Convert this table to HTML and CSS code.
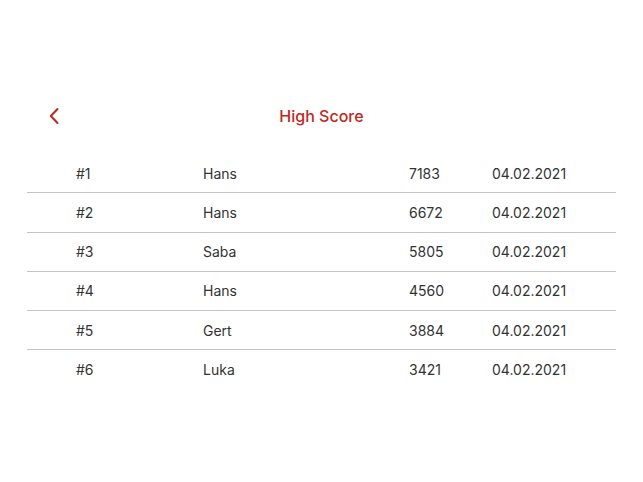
FILE: index.html
```html
<!DOCTYPE html>
<html lang="de">
<head>
<meta charset="utf-8">
<title>High Score</title>
<link rel="stylesheet" href="styles.css">
</head>
<body>
<div class="page">
  <header class="nav">
    <button class="back" aria-label="Zurück">
      <svg width="12" height="18" viewBox="0 0 12 18"><path d="M9.5 2 L2.8 9 L9.5 16" fill="none" stroke="#c0281e" stroke-width="2" stroke-linecap="round" stroke-linejoin="round"/></svg>
    </button>
    <h1 class="title">High Score</h1>
    <span></span>
  </header>
  <div class="table">
    <div class="row"><span>#1</span><span>Hans</span><span>7183</span><span>04.02.2021</span></div>
    <div class="row"><span>#2</span><span>Hans</span><span>6672</span><span>04.02.2021</span></div>
    <div class="row"><span>#3</span><span>Saba</span><span>5805</span><span>04.02.2021</span></div>
    <div class="row"><span>#4</span><span>Hans</span><span>4560</span><span>04.02.2021</span></div>
    <div class="row"><span>#5</span><span>Gert</span><span>3884</span><span>04.02.2021</span></div>
    <div class="row"><span>#6</span><span>Luka</span><span>3421</span><span>04.02.2021</span></div>
  </div>
</div>
</body>
</html>
```

FILE: styles.css
```css
html, body {
  margin: 0;
  background: #ffffff;
}
body {
  font-family: Inter, "Noto Sans", "Liberation Sans", sans-serif;
  color: #333333;
}
.page {
  padding: 96px 27px 0;
}
.nav {
  display: grid;
  grid-template-columns: 1fr auto 1fr;
  align-items: center;
  height: 40px;
}
.back {
  justify-self: start;
  margin-left: 21px;
  padding: 0;
  border: 0;
  background: none;
  display: flex;
  align-items: center;
}
.title {
  margin: 0;
  font-size: 16px;
  font-weight: 500;
  color: #c0281e;
}
.table {
  margin-top: 18px;
}
.row {
  display: grid;
  grid-template-columns: 127px 206px 83px auto;
  align-items: center;
  height: 38.25px;
  padding-left: 49px;
  font-size: 14px;
  border-bottom: 1px solid #c4c4c4;
}
.row:last-child {
  border-bottom: 0;
}
```
